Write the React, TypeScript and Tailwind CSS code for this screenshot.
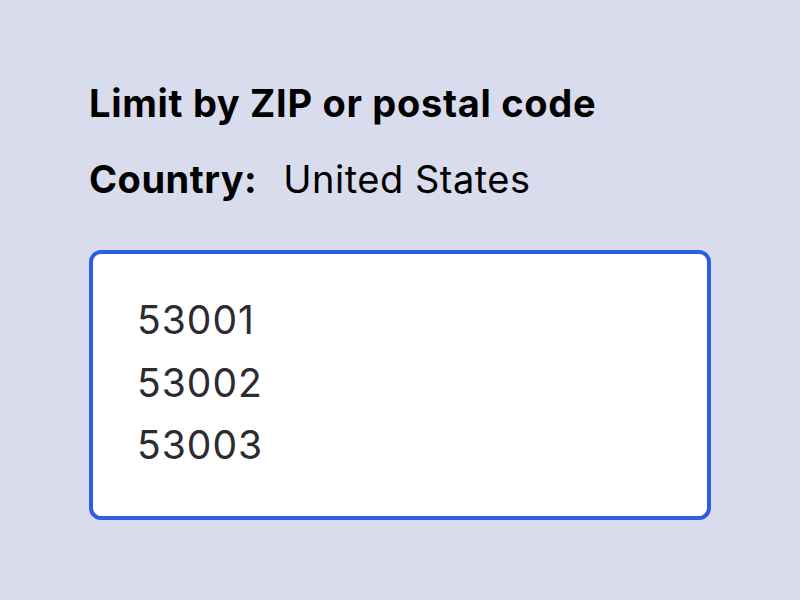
import React from 'react';

const zips = ['53001', '53002', '53003'];

export default function App() {
  return (
    <div className="w-[800px] h-[600px] bg-[#d9dcec] font-['Inter',sans-serif] text-black">
      <div className="pt-[79px] pl-[89px] pr-[89px]">
        <h1 className="text-[38px] leading-[48px] font-bold tracking-[0.7px]">Limit by ZIP or postal code</h1>
        <div className="mt-[28px] flex items-baseline gap-[26px] text-[38px] leading-[48px] tracking-[0.5px]">
          <span className="font-bold">Country:</span>
          <span>United States</span>
        </div>
        <div className="mt-[47px] h-[270px] rounded-[12px] border-4 border-[#2a5fe0] bg-white pl-[44px] pt-[35px]">
          {zips.map((z) => (
            <div key={z} className="text-[39px] leading-[62.5px] tracking-[1px] text-[#2b2b31]">
              {z}
            </div>
          ))}
        </div>
      </div>
    </div>
  );
}
